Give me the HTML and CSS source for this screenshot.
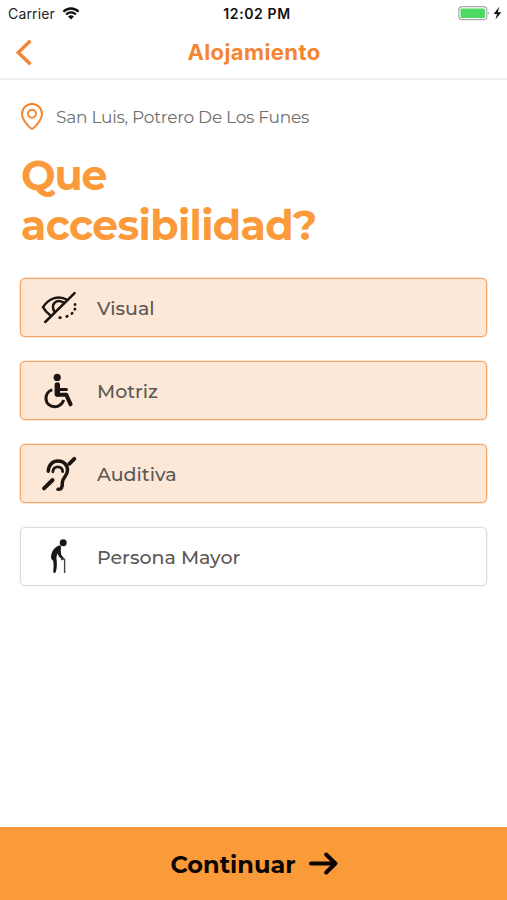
FILE: index.html
```html
<!DOCTYPE html>
<html lang="es">
<head>
<meta charset="utf-8">
<title>Alojamiento</title>
<link rel="stylesheet" href="styles.css">
</head>
<body>
<div class="screen">
  <div class="status">
    <div class="carrier"><span>Carrier</span>
      <svg width="18" height="14" viewBox="0 0 18 14" fill="none" stroke="#111" stroke-width="2.3"><path d="M1.4 4.7C5.6 .4 12.4 .4 16.6 4.7M4.1 7.5C6.9 4.7 11.1 4.7 13.9 7.5"/><path d="M6 9.4Q9 7 12 9.4L9 12.5Z" fill="#111" stroke="none"/></svg>
    </div>
    <div class="time">12:02 PM</div>
    <div class="power">
      <svg width="44" height="16" viewBox="0 0 44 16"><rect x=".8" y=".7" width="28" height="13" rx="3.5" fill="#fff" stroke="#aaa" stroke-width="1.2"/><rect x="2.5" y="2.5" width="24.5" height="9.5" rx="1.5" fill="#4cd964"/><path d="M30.2 5.3Q32 7.2 30.2 9.1Z" fill="#999"/><path d="M41.2 .8L35.7 8H39L37.5 13.6L43.3 6.3H39.9Z" fill="#111"/></svg>
    </div>
  </div>
  <header class="nav">
    <svg class="back" width="18" height="28" viewBox="0 0 18 28" fill="none" stroke="#f48532" stroke-width="3.4"><path d="M15.5 1.7L3.2 13.5L15.5 25.3"/></svg>
    <div class="nav-title">Alojamiento</div>
  </header>
  <main>
    <div class="place">
      <svg width="24" height="28" viewBox="0 0 24 28" fill="none" stroke="#f48532" stroke-width="2"><path d="M12 25.7C10 25.7 2 16.5 2 10.9C2 5.2 6.4 .9 12 .9S22 5.2 22 10.9C22 16.5 14 25.7 12 25.7Z"/><circle cx="12" cy="10.7" r="4"/></svg>
      <span>San Luis, Potrero De Los Funes</span>
    </div>
    <h1><span class="line que">Que</span><span class="line">accesibilidad?</span></h1>
    <div class="options">
      <div class="option on">
        <svg width="40" height="40" viewBox="0 0 40 40" fill="none" stroke="#1c1512" stroke-width="2.5" stroke-linecap="round"><path d="M28.6 12C20 7 10 9.5 4 19.2Q6.9 24.3 10.7 26.8M15.2 23.4C11.5 15.8 17.4 10.6 24.2 14.4M6.2 34L35.6 5.2"/><path d="M36 16.4L36.1 16.6M36 21L35.8 21.3M33.2 25.2L32.8 25.6M28.3 28.2L27.7 28.5M21.4 29.7H20.7" stroke-width="2.7"/></svg>
        <span>Visual</span>
      </div>
      <div class="option on">
        <svg width="40" height="40" viewBox="0 0 40 40" fill="none" stroke="#1c1512" stroke-linecap="round" stroke-linejoin="round"><circle cx="18.2" cy="6.4" r="3.6" fill="#1c1512" stroke="none"/><path d="M18.3 14V23.7H27.2L31.6 33.3" stroke-width="4"/><path d="M18.3 14V23" stroke-width="5.4"/><path d="M20 18.4H27.4" stroke-width="3"/><path d="M13.2 18.6C4 22.2 5 35.2 15.8 35.7Q22 35.7 24.8 29" stroke-width="3.1" stroke-linecap="butt"/></svg>
        <span>Motriz</span>
      </div>
      <div class="option on">
        <svg width="40" height="40" viewBox="0 0 40 40" fill="none" stroke="#1c1512" stroke-width="3.5" stroke-linecap="round" stroke-linejoin="round"><path d="M5 34.4L13.6 26M30.3 9.8L35.3 4.8" stroke-width="3.9"/><path d="M9.3 17.2C9.5 10.7 13.7 7 18.9 7C25 7 28.9 11.2 28.4 17C28.1 22.4 23.8 23 23.4 28.2C23.4 33.7 22.6 35.6 19 35.3"/><path d="M13.9 17.8C13.9 11.2 23.8 11.2 23.6 17.6" stroke-width="2.8"/></svg>
        <span>Auditiva</span>
      </div>
      <div class="option">
        <svg width="40" height="40" viewBox="0 0 40 40" fill="#171719"><circle cx="24.2" cy="5.7" r="3.5"/><path d="M20.7 8.2C15.5 9.7 12.2 14.5 12 20.2Q12 22 14.3 24.1Q15 28.3 14.2 35Q15.5 36.8 16.8 35C18.6 29.4 17.7 23.5 17.4 20.8L18.3 16.5L20.3 20L24 23.1L25.4 21.8L22.2 17.7L21.7 13Q22.9 9.1 20.7 8.2Z"/><path d="M22.3 23.1Q23.8 20.6 25.6 22.5V36" fill="none" stroke="#444" stroke-width="1.4"/></svg>
        <span>Persona Mayor</span>
      </div>
    </div>
  </main>
  <footer class="next">
    <span>Continuar</span>
    <svg width="30" height="24" viewBox="0 0 30 24" fill="none" stroke="#0b0603" stroke-width="4" stroke-linecap="round" stroke-linejoin="round"><path d="M3 11.5H27M18.2 2.5L27.4 11.5L18.2 20.5"/></svg>
  </footer>
</div>
</body>
</html>
```
FILE: styles.css
```css
* { box-sizing: border-box; }
body { margin: 0; background: #fff; font-family: Montserrat, Inter, sans-serif; }
svg { display: block; flex: none; }
.screen { width: 507px; height: 900px; display: flex; flex-direction: column; }
.status { height: 27px; padding: 0 5px 0 8px; display: grid; grid-template-columns: 1fr auto 1fr; align-items: center; font: 14px/27px Inter, sans-serif; letter-spacing: 0.15px; color: #222; }
.carrier { display: flex; align-items: center; gap: 7px; }
.time { font-weight: 600; letter-spacing: 0.6px; padding-left: 4px; color: #111; }
.power { justify-self: end; }
.nav { height: 53px; border-bottom: 2px solid #eee; display: grid; grid-template-columns: 1fr auto 1fr; align-items: center; padding: 0 15px; }
.nav-title { font: 650 22px/50px Inter, sans-serif; letter-spacing: 0.4px; padding: 0 0 2px 1px; color: #f48532; }
main { flex: 1; padding: 22px 20px 0; }
.place { display: flex; align-items: center; gap: 12px; height: 30px; font-size: 17px; letter-spacing: -0.26px; color: #707070; white-space: nowrap; }
h1 { margin: 18px 0 0; font-size: 41px; line-height: 50px; letter-spacing: -0.68px; font-weight: 700; color: #fa9a3a; }
.line { display: block; white-space: nowrap; padding-left: 1px; }
.que { letter-spacing: -1.1px; }
.options { margin-top: 28px; display: grid; gap: 24px; }
.option { height: 59px; border: 1px solid #ddd; box-shadow: 0 0 0 0.5px #ddd8; border-radius: 5px; display: flex; align-items: center; gap: 18px; padding: 1px 0 0 18px; font-size: 19px; font-weight: 500; color: #5b5955; }
.option span { padding-top: 1px; }
.on { background: #fde7d6; border-color: #f4a566; box-shadow: 0 0 0 0.5px #f4a56688; }
.next { height: 73px; padding: 2px 0 0 1px; background: #fa9a38; display: flex; align-items: center; justify-content: center; gap: 12px; font-size: 24px; font-weight: 700; color: #0b0603; }
.next svg { margin-bottom: 1px; }
```
